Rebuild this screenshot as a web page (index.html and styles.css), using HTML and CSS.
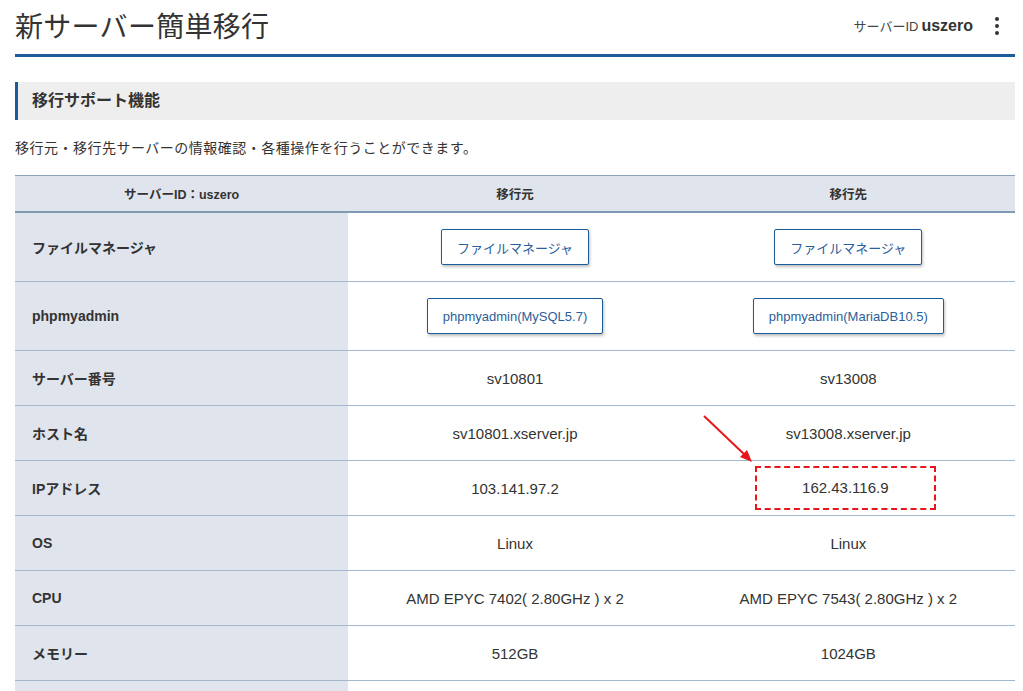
FILE: index.html
```html
<!DOCTYPE html>
<html lang="ja">
<head>
<meta charset="utf-8">
<title>新サーバー簡単移行</title>
<link rel="stylesheet" href="styles.css">
</head>
<body>
<div class="page">
  <header class="topbar">
    <h1 class="title">新サーバー簡単移行</h1>
    <div class="account">
      <span class="acc-label">サーバーID</span>
      <span class="acc-id">uszero</span>
      <button class="kebab" aria-label="menu"><span></span><span></span><span></span></button>
    </div>
  </header>

  <h2 class="section">移行サポート機能</h2>
  <p class="desc">移行元・移行先サーバーの情報確認・各種操作を行うことができます。</p>

  <table class="info">
    <thead>
      <tr><th>サーバーID：uszero</th><th>移行元</th><th>移行先</th></tr>
    </thead>
    <tbody>
      <tr class="tall"><th>ファイルマネージャ</th><td><button class="btn">ファイルマネージャ</button></td><td><button class="btn">ファイルマネージャ</button></td></tr>
      <tr class="tall"><th>phpmyadmin</th><td><button class="btn btn-sm">phpmyadmin(MySQL5.7)</button></td><td><button class="btn btn-sm">phpmyadmin(MariaDB10.5)</button></td></tr>
      <tr><th>サーバー番号</th><td>sv10801</td><td>sv13008</td></tr>
      <tr><th>ホスト名</th><td>sv10801.xserver.jp</td><td class="arrow-cell">sv13008.xserver.jp
        <svg class="arrow" width="54" height="52" viewBox="0 0 54 52"><line x1="2" y1="2" x2="44" y2="42" stroke="#e8161b" stroke-width="2"/><polygon points="50,48 38,43 45,36" fill="#e8161b"/></svg>
      </td></tr>
      <tr><th>IPアドレス</th><td>103.141.97.2</td><td><span class="mark">162.43.116.9</span></td></tr>
      <tr><th>OS</th><td>Linux</td><td>Linux</td></tr>
      <tr><th>CPU</th><td>AMD EPYC 7402( 2.80GHz ) x 2</td><td>AMD EPYC 7543( 2.80GHz ) x 2</td></tr>
      <tr><th>メモリー</th><td>512GB</td><td>1024GB</td></tr>
      <tr><th>&nbsp;</th><td></td><td></td></tr>
    </tbody>
  </table>
</div>
</body>
</html>
```
FILE: styles.css
```css
html, body { margin: 0; padding: 0; background: #fff; }
body {
  font-family: "Liberation Sans", "Noto Sans CJK JP", sans-serif;
  color: #333;
  overflow: hidden;
  height: 691px;
}
.page { padding: 0 8px 0 15px; width: 1000px; }

.topbar {
  display: flex;
  align-items: center;
  justify-content: space-between;
  height: 54px;
  border-bottom: 3px solid #1d5c9b;
  box-sizing: content-box;
}
.title {
  margin: 0;
  font-size: 28px;
  letter-spacing: 0.3px;
  font-weight: 400;
  color: #333;
  line-height: 1;
  position: relative;
  top: 1px;
}
.account { display: flex; align-items: center; margin-top: -3px; }
.acc-label { font-size: 13px; color: #444; }
.acc-id { font-size: 16px; font-weight: 700; color: #333; margin-left: 3px; }
.kebab {
  display: flex; flex-direction: column; gap: 3px;
  border: 0; background: none; padding: 0;
  margin: 0 16px 0 22px;
}
.kebab span { width: 4px; height: 4px; border-radius: 50%; background: #333; display: block; }

.section {
  margin: 25px 0 0;
  height: 38px;
  background: #eeeeee;
  border-left: 3px solid #1d5c9b;
  font-size: 16px;
  font-weight: 700;
  color: #333;
  display: flex;
  align-items: center;
  padding-left: 14px;
  line-height: 1;
}
.desc {
  margin: 19px 0 0;
  font-size: 14px;
  letter-spacing: 0.5px;
  color: #333;
  line-height: 18px;
}

.info {
  margin-top: 18px;
  width: 1000px;
  border-collapse: collapse;
  table-layout: fixed;
  font-size: 15px;
}
.info thead th {
  height: 35px;
  background: #e0e5ed;
  border-top: 1px solid #8ea3ba;
  border-bottom: 2px solid #7f9ab5;
  font-size: 12.5px;
  font-weight: 700;
  color: #333;
  text-align: center;
  padding: 0;
}
.info tbody th {
  background: #e0e5ed;
  text-align: left;
  font-weight: 700;
  font-size: 14px;
  color: #333;
  padding: 0 0 0 17px;
  height: 54px;
  border-bottom: 1px solid #a3b8cc;
}
.info tbody td {
  text-align: center;
  height: 54px;
  padding: 0;
  border-bottom: 1px solid #a3b8cc;
  color: #333;
}
.info tbody tr.tall th, .info tbody tr.tall td { height: 68px; }

.btn {
  font-family: "Liberation Sans", "Noto Sans CJK JP", sans-serif;
  font-size: 13px;
  color: #2d5e99;
  background: #fff;
  border: 1px solid #1d5c9b;
  border-radius: 2px;
  height: 36px;
  padding: 0 15px;
  box-shadow: 1px 2px 3px rgba(0,0,0,0.25);
  cursor: pointer;
}
.btn-sm { font-size: 13px; padding: 0 15px; }

.arrow-cell { position: relative; }
.arrow {
  position: absolute;
  left: 20px;
  top: 8px;
}
.mark {
  display: inline-block;
  width: 177px;
  height: 40px;
  line-height: 40px;
  border: 2px dashed #e8161b;
  margin-right: 6px;
}
```
